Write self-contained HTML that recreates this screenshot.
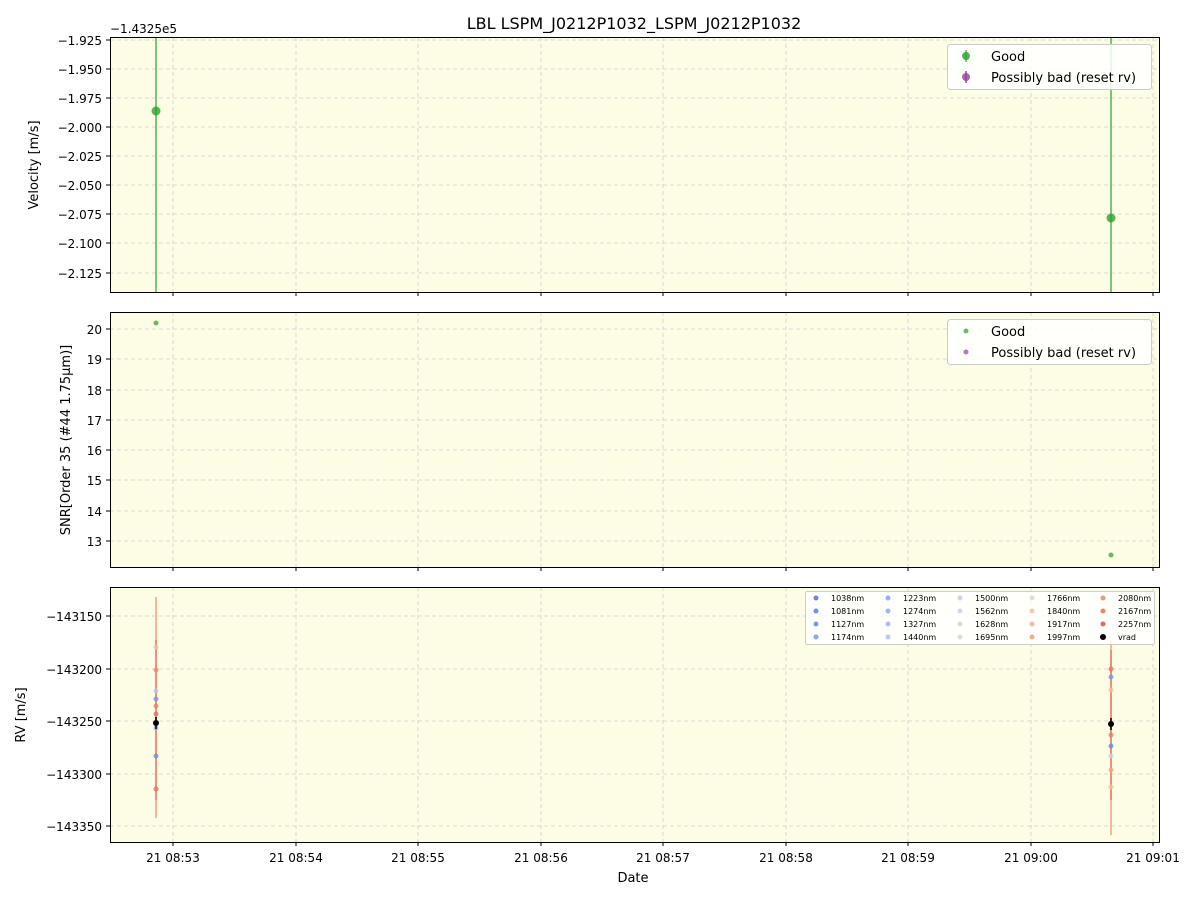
<!DOCTYPE html>
<html><head><meta charset="utf-8"><style>
body{margin:0;background:#fff;}
svg{display:block;font-family:"DejaVu Sans","Liberation Sans",sans-serif;}
.g{stroke:#d0d0d0;stroke-dasharray:4,3;stroke-width:0.8}
.t{font-size:12px;fill:#000}
.l{font-size:13px;fill:#000}
</style></head><body>
<svg width="1200" height="900" viewBox="0 0 1200 900">
<text x="634" y="29" text-anchor="middle" font-size="16">LBL LSPM_J0212P1032_LSPM_J0212P1032</text>

<rect x="110" y="37" width="1049" height="255" fill="#fdfce4"/>
<rect x="110" y="312" width="1049" height="255" fill="#fdfce4"/>
<rect x="110" y="587" width="1049" height="255" fill="#fdfce4"/>

<g class="g">
<path d="M173 37V292M296 37V292M418 37V292M541 37V292M663 37V292M786 37V292M908 37V292M1031 37V292M1153 37V292"/>
<path d="M173 312V567M296 312V567M418 312V567M541 312V567M663 312V567M786 312V567M908 312V567M1031 312V567M1153 312V567"/>
<path d="M173 587V842M296 587V842M418 587V842M541 587V842M663 587V842M786 587V842M908 587V842M1031 587V842M1153 587V842"/>
<path d="M110 40H1159M110 69H1159M110 98H1159M110 127H1159M110 156H1159M110 185H1159M110 214H1159M110 243H1159M110 273H1159"/>
<path d="M110 329H1159M110 359H1159M110 390H1159M110 420H1159M110 450H1159M110 480H1159M110 511H1159M110 541H1159"/>
<path d="M110 616H1159M110 669H1159M110 721H1159M110 774H1159M110 826H1159"/>
</g>

<line x1="156" y1="37" x2="156" y2="292" stroke="#5cb85c" stroke-width="2" opacity="0.8"/>
<line x1="1111" y1="37" x2="1111" y2="292" stroke="#5cb85c" stroke-width="2" opacity="0.8"/>
<circle cx="156" cy="111" r="4.5" fill="#2ca02c" opacity="0.8"/>
<circle cx="1111" cy="218" r="4.5" fill="#2ca02c" opacity="0.8"/>

<circle cx="156" cy="323" r="2.5" fill="#2ca02c" opacity="0.7"/>
<circle cx="1111" cy="555" r="2.5" fill="#2ca02c" opacity="0.7"/>

<line x1="156" y1="597" x2="156" y2="818" stroke="#f4b89a" stroke-width="2"/>
<line x1="156" y1="640" x2="156" y2="800" stroke="#e8806c" stroke-width="2" opacity="0.7"/>
<line x1="1111" y1="640" x2="1111" y2="835" stroke="#f4b89a" stroke-width="2"/>
<line x1="1111" y1="650" x2="1111" y2="800" stroke="#e8806c" stroke-width="2" opacity="0.7"/>
<g opacity="0.8">
<circle cx="156" cy="647" r="2.5" fill="#f6c1a5"/><circle cx="156" cy="670" r="2.5" fill="#ee8a70"/>
<circle cx="156" cy="691" r="2.5" fill="#b8c9f0"/><circle cx="156" cy="699" r="2.5" fill="#7b96e8"/>
<circle cx="156" cy="706" r="2.5" fill="#e8806c"/><circle cx="156" cy="714" r="2.5" fill="#d9736b"/>
<circle cx="156" cy="728" r="2.5" fill="#8faaf0"/><circle cx="156" cy="756" r="2.5" fill="#6f8fe0"/>
<circle cx="156" cy="789" r="2.5" fill="#ee7060"/>
<circle cx="1111" cy="669" r="2.5" fill="#ee7060"/><circle cx="1111" cy="677" r="2.5" fill="#7b96e8"/>
<circle cx="1111" cy="690" r="2.5" fill="#f6c1a5"/><circle cx="1111" cy="735" r="2.5" fill="#e8806c"/>
<circle cx="1111" cy="746" r="2.5" fill="#6f8fe0"/><circle cx="1111" cy="756" r="2.5" fill="#c8d2ea"/>
<circle cx="1111" cy="770" r="2.5" fill="#f4a88a"/><circle cx="1111" cy="787" r="2.5" fill="#f6c1a5"/>
</g>
<line x1="156" y1="717" x2="156" y2="729" stroke="#000" stroke-width="1.5"/>
<circle cx="156" cy="723" r="3" fill="#000"/>
<line x1="1111" y1="718" x2="1111" y2="730" stroke="#000" stroke-width="1.5"/>
<circle cx="1111" cy="724" r="3" fill="#000"/>

<g fill="none" stroke="#000" stroke-width="1">
<rect x="110.5" y="37.5" width="1049" height="255"/>
<rect x="110.5" y="312.5" width="1049" height="255"/>
<rect x="110.5" y="587.5" width="1049" height="255"/>
</g>

<g stroke="#000">
<path d="M173 292v4M296 292v4M418 292v4M541 292v4M663 292v4M786 292v4M908 292v4M1031 292v4M1153 292v4"/>
<path d="M173 567v4M296 567v4M418 567v4M541 567v4M663 567v4M786 567v4M908 567v4M1031 567v4M1153 567v4"/>
<path d="M173 842v4M296 842v4M418 842v4M541 842v4M663 842v4M786 842v4M908 842v4M1031 842v4M1153 842v4"/>
<path d="M106 40h4M106 69h4M106 98h4M106 127h4M106 156h4M106 185h4M106 214h4M106 243h4M106 273h4"/>
<path d="M106 329h4M106 359h4M106 390h4M106 420h4M106 450h4M106 480h4M106 511h4M106 541h4"/>
<path d="M106 616h4M106 669h4M106 721h4M106 774h4M106 826h4"/>
</g>
<g class="t" text-anchor="middle">
<text x="173" y="862">21 08:53</text><text x="296" y="862">21 08:54</text><text x="418" y="862">21 08:55</text>
<text x="541" y="862">21 08:56</text><text x="663" y="862">21 08:57</text><text x="786" y="862">21 08:58</text>
<text x="908" y="862">21 08:59</text><text x="1031" y="862">21 09:00</text><text x="1153" y="862">21 09:01</text>
</g>
<text class="l" x="633" y="882" text-anchor="middle">Date</text>
<g class="t" text-anchor="end">
<text x="102" y="45">−1.925</text><text x="102" y="74">−1.950</text><text x="102" y="103">−1.975</text>
<text x="102" y="132">−2.000</text><text x="102" y="161">−2.025</text><text x="102" y="190">−2.050</text>
<text x="102" y="219">−2.075</text><text x="102" y="248">−2.100</text><text x="102" y="278">−2.125</text>
<text x="102" y="334">20</text><text x="102" y="364">19</text><text x="102" y="395">18</text><text x="102" y="425">17</text>
<text x="102" y="455">16</text><text x="102" y="485">15</text><text x="102" y="516">14</text><text x="102" y="546">13</text>
<text x="102" y="621">−143150</text><text x="102" y="674">−143200</text><text x="102" y="726">−143250</text>
<text x="102" y="779">−143300</text><text x="102" y="831">−143350</text>
</g>
<text class="t" x="110" y="33">−1.4325e5</text>
<text class="l" transform="translate(38,165) rotate(-90)" text-anchor="middle">Velocity [m/s]</text>
<text class="l" transform="translate(70,440) rotate(-90)" text-anchor="middle">SNR[Order 35 (#44 1.75μm)]</text>
<text class="l" transform="translate(25,715) rotate(-90)" text-anchor="middle">RV [m/s]</text>

<rect x="947.5" y="44.5" width="204" height="45" rx="3" fill="#fff" fill-opacity="0.85" stroke="#ccc"/>
<line x1="966" y1="50" x2="966" y2="62" stroke="#5cb85c" stroke-width="1.5"/><circle cx="966" cy="56" r="4" fill="#2ca02c" opacity="0.8"/>
<line x1="966" y1="71" x2="966" y2="83" stroke="#a040a0" stroke-width="1.5"/><circle cx="966" cy="77" r="4" fill="#9b3ea0" opacity="0.8"/>
<text class="l" x="991" y="61">Good</text><text class="l" x="991" y="82">Possibly bad (reset rv)</text>

<rect x="947.5" y="319.5" width="204" height="45" rx="3" fill="#fff" fill-opacity="0.85" stroke="#ccc"/>
<circle cx="966" cy="331" r="2.5" fill="#2ca02c" opacity="0.7"/><circle cx="966" cy="352" r="2.5" fill="#9b3ea0" opacity="0.7"/>
<text class="l" x="991" y="336">Good</text><text class="l" x="991" y="357">Possibly bad (reset rv)</text>

<rect x="805.5" y="591.5" width="349" height="53" rx="2" fill="#fff" fill-opacity="0.85" stroke="#ccc"/>
<g font-size="8" fill="#000">
<circle cx="816" cy="598" r="2.5" fill="#6a85e0"/><text x="831" y="601">1038nm</text>
<circle cx="816" cy="611" r="2.5" fill="#7290e6"/><text x="831" y="614">1081nm</text>
<circle cx="816" cy="624" r="2.5" fill="#7c9aec"/><text x="831" y="627">1127nm</text>
<circle cx="816" cy="637" r="2.5" fill="#88a6f2"/><text x="831" y="640">1174nm</text>
<circle cx="888" cy="598" r="2.5" fill="#92b0f4"/><text x="903" y="601">1223nm</text>
<circle cx="888" cy="611" r="2.5" fill="#9cb8f6"/><text x="903" y="614">1274nm</text>
<circle cx="888" cy="624" r="2.5" fill="#a8c2f6"/><text x="903" y="627">1327nm</text>
<circle cx="888" cy="637" r="2.5" fill="#b6ccf4"/><text x="903" y="640">1440nm</text>
<circle cx="960" cy="598" r="2.5" fill="#c4d4f2"/><text x="975" y="601">1500nm</text>
<circle cx="960" cy="611" r="2.5" fill="#cdd8ee"/><text x="975" y="614">1562nm</text>
<circle cx="960" cy="624" r="2.5" fill="#d6dbe6"/><text x="975" y="627">1628nm</text>
<circle cx="960" cy="637" r="2.5" fill="#dddcdc"/><text x="975" y="640">1695nm</text>
<circle cx="1032" cy="598" r="2.5" fill="#ecd8cc"/><text x="1047" y="601">1766nm</text>
<circle cx="1032" cy="611" r="2.5" fill="#f2cbb8"/><text x="1047" y="614">1840nm</text>
<circle cx="1032" cy="624" r="2.5" fill="#f4bca2"/><text x="1047" y="627">1917nm</text>
<circle cx="1032" cy="637" r="2.5" fill="#f4ac8e"/><text x="1047" y="640">1997nm</text>
<circle cx="1103" cy="598" r="2.5" fill="#f09a7a"/><text x="1118" y="601">2080nm</text>
<circle cx="1103" cy="611" r="2.5" fill="#e8846a"/><text x="1118" y="614">2167nm</text>
<circle cx="1103" cy="624" r="2.5" fill="#dc6e5a"/><text x="1118" y="627">2257nm</text>
<circle cx="1103" cy="637" r="3" fill="#000"/><text x="1118" y="640">vrad</text>
</g>
</svg>
</body></html>
